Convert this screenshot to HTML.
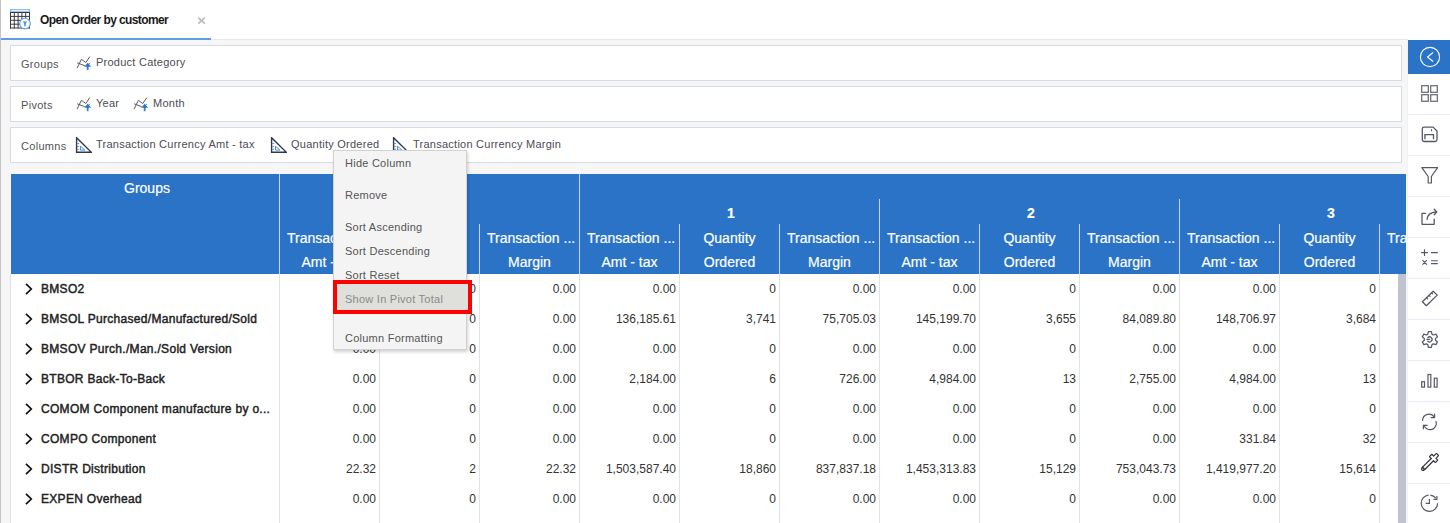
<!DOCTYPE html>
<html><head><meta charset="utf-8">
<style>
*{box-sizing:border-box;margin:0;padding:0}
html,body{width:1450px;height:523px;overflow:hidden;background:#fff;font-family:"Liberation Sans",sans-serif;position:relative}
.abs{position:absolute}
#leftline{left:0;top:0;width:1px;height:523px;background:#c4c4c4}
#tabbar{left:1px;top:0;width:1407px;height:40px;background:#fff;border-bottom:1px solid #e9e9e9}
#tab{left:1px;top:0;width:210px;height:40px;border-bottom:2px solid #5f9de9}
#tabtitle{left:40px;top:12.5px;font-size:12px;font-weight:bold;color:#1a1a1a;letter-spacing:-0.6px;white-space:nowrap}
#tabx{left:197px;top:13px;font-size:14px;font-weight:bold;color:#bdbdbd}
#content{left:1px;top:40px;width:1406px;height:483px;background:#f6f6f6}
.panel{left:10px;width:1392px;height:36px;background:#fff;border:1px solid #d6dce4}
.plabel{position:absolute;left:10px;font-size:11px;color:#555;white-space:nowrap;letter-spacing:0.3px}
.chip{position:absolute;font-size:11px;color:#4c4c56;white-space:nowrap;letter-spacing:0.25px}
.ico{position:absolute}
#table{left:11px;top:174px;width:1395px;height:349px;overflow:hidden;background:#fff}
#thead{left:0;top:0;width:1395px;height:100px;background:#2a73c6}
.vl{position:absolute;width:1px;background:#c9d6ea}
.vlb{position:absolute;width:1px;background:#dfe3ea}
.ht{position:absolute;color:#fff;font-size:14px;text-align:center;white-space:nowrap;line-height:24px;-webkit-text-stroke:0.2px #fff}
.rn{position:absolute;left:30px;font-size:12px;font-weight:normal;letter-spacing:0.3px;-webkit-text-stroke:0.45px #222;color:#222;white-space:nowrap}
.chev{position:absolute;left:14px}
.num{position:absolute;font-size:12px;color:#333;text-align:right;white-space:nowrap;width:97px}
#scroll{left:1387px;top:100px;width:8px;height:249px;background:#c0c2d0}
#sidebar{left:1407px;top:40px;width:43px;height:483px;background:#fff;border-left:1px solid #eef2f9}
#sbtn{left:1408px;top:40px;width:42px;height:34px;background:#2a73c6}
.sep{position:absolute;left:1408px;width:42px;height:1px;background:#e9eef6}
#menu{left:333px;top:150px;width:134px;height:200px;background:#f4f4f4;border:1px solid #d2d2d2;box-shadow:1px 2px 3px rgba(0,0,0,0.18)}
.mi{position:absolute;left:11px;font-size:11px;color:#555;white-space:nowrap;letter-spacing:0.25px}
#redbox{left:333px;top:280px;width:139px;height:34px;border:4px solid #f00}
#redin{left:337px;top:284px;width:131px;height:26px;background:#dfdfdb}
</style></head><body>
<div id="leftline" class="abs"></div>
<div id="tabbar" class="abs"></div>
<div id="tab" class="abs"></div>
<!-- tab icon -->
<svg class="abs" style="left:9px;top:8px" width="24" height="23" viewBox="9 8 24 23">
  <rect x="10" y="9" width="20" height="3" fill="#93bdf0"/>
  <rect x="11.5" y="10.2" width="17" height="0.9" fill="#fff"/>
  <g stroke="#3a3a44" stroke-width="1" fill="none">
    <path d="M10.5 12 V28.5 M14.3 12 V28.5 M18.1 12 V28.5 M21.9 12 V28.5 M25.7 12 V28.5 M29.5 12 V28.5"/>
    <path d="M10 12.5 H30 M10 16.4 H30 M10 20.3 H30 M10 24.2 H30 M10 28 H30"/>
  </g>
  <circle cx="25" cy="23.6" r="5.3" fill="#fff" stroke="#5f9de9" stroke-width="1.1"/>
  <path d="M22.7 21.4 H27.3 L25.8 23.6 V26.2 H24.2 V23.6 Z" fill="#4a90e2"/>
</svg>
<div id="tabtitle" class="abs">Open Order by customer</div>
<svg class="abs" style="left:196px;top:15px" width="11" height="11" viewBox="196 15 11 11"><path d="M198.3 17.6 L204.8 23.7 M204.8 17.6 L198.3 23.7" stroke="#bcbcbc" stroke-width="1.7"/></svg>

<div id="content" class="abs"></div>

<!-- Panels -->
<div class="panel abs" style="top:45px">
  <div class="plabel" style="top:12px">Groups</div>
  <svg class="ico" style="left:65px;top:10px" width="16" height="15" viewBox="0 0 16 15">
    <path d="M1 12.2 L5.4 3.3 L9.8 6.5 L13.8 0.6" fill="none" stroke="#5a5a62" stroke-width="1"/>
    <path d="M1.2 6.8 L9.5 10 L13.8 7.4" fill="none" stroke="#5a5a62" stroke-width="1"/>
    <path d="M11.7 6.4 L15.6 10.9 H12.8 V14.3 H10.6 V10.9 H7.8 Z" fill="#2a73c6" stroke="#fff" stroke-width="0.5"/>
  </svg>
  <div class="chip" style="left:85px;top:10px">Product Category</div>
</div>
<div class="panel abs" style="top:86px">
  <div class="plabel" style="top:12px">Pivots</div>
  <svg class="ico" style="left:65px;top:10px" width="16" height="15" viewBox="0 0 16 15">
    <path d="M1 12.2 L5.4 3.3 L9.8 6.5 L13.8 0.6" fill="none" stroke="#5a5a62" stroke-width="1"/>
    <path d="M1.2 6.8 L9.5 10 L13.8 7.4" fill="none" stroke="#5a5a62" stroke-width="1"/>
    <path d="M11.7 6.4 L15.6 10.9 H12.8 V14.3 H10.6 V10.9 H7.8 Z" fill="#2a73c6" stroke="#fff" stroke-width="0.5"/>
  </svg>
  <div class="chip" style="left:85px;top:10px">Year</div>
  <svg class="ico" style="left:122px;top:10px" width="16" height="15" viewBox="0 0 16 15">
    <path d="M1 12.2 L5.4 3.3 L9.8 6.5 L13.8 0.6" fill="none" stroke="#5a5a62" stroke-width="1"/>
    <path d="M1.2 6.8 L9.5 10 L13.8 7.4" fill="none" stroke="#5a5a62" stroke-width="1"/>
    <path d="M11.7 6.4 L15.6 10.9 H12.8 V14.3 H10.6 V10.9 H7.8 Z" fill="#2a73c6" stroke="#fff" stroke-width="0.5"/>
  </svg>
  <div class="chip" style="left:142px;top:10px">Month</div>
</div>
<div class="panel abs" style="top:127px">
  <div class="plabel" style="top:12px">Columns</div>
  <svg class="ico" style="left:64px;top:9px" width="17" height="17" viewBox="0 0 17 17">
    <path d="M1.6 0.7 V15.3 H16.4 Z" fill="none" stroke="#34364a" stroke-width="1.4" stroke-linejoin="miter"/>
    <path d="M2.2 6.5 H4.2 M2.2 9.4 H4.2 M2.2 12.3 H4.2" stroke="#4a8ee0" stroke-width="0.9"/>
    <path d="M5.5 9.2 V13.1 H9.9 Z" fill="none" stroke="#4a8ee0" stroke-width="1"/>
  </svg>
  <div class="chip" style="left:85px;top:10px">Transaction Currency Amt - tax</div>
  <svg class="ico" style="left:259px;top:9px" width="17" height="17" viewBox="0 0 17 17">
    <path d="M1.6 0.7 V15.3 H16.4 Z" fill="none" stroke="#34364a" stroke-width="1.4" stroke-linejoin="miter"/>
    <path d="M2.2 6.5 H4.2 M2.2 9.4 H4.2 M2.2 12.3 H4.2" stroke="#4a8ee0" stroke-width="0.9"/>
    <path d="M5.5 9.2 V13.1 H9.9 Z" fill="none" stroke="#4a8ee0" stroke-width="1"/>
  </svg>
  <div class="chip" style="left:280px;top:10px">Quantity Ordered</div>
  <svg class="ico" style="left:381px;top:9px" width="17" height="17" viewBox="0 0 17 17">
    <path d="M1.6 0.7 V15.3 H16.4 Z" fill="none" stroke="#34364a" stroke-width="1.4" stroke-linejoin="miter"/>
    <path d="M2.2 6.5 H4.2 M2.2 9.4 H4.2 M2.2 12.3 H4.2" stroke="#4a8ee0" stroke-width="0.9"/>
    <path d="M5.5 9.2 V13.1 H9.9 Z" fill="none" stroke="#4a8ee0" stroke-width="1"/>
  </svg>
  <div class="chip" style="left:402px;top:10px">Transaction Currency Margin</div>
</div>

<!-- Table -->
<div class="abs" style="left:10px;top:274px;width:1px;height:249px;background:#dbe1e9"></div>
<div id="table" class="abs">
  <div id="thead" class="abs">
    <div class="ht" style="left:2px;width:268px;top:2px">Groups</div>
  </div>
  <div id="tcols">
<div class="vl" style="left:268px;top:0px;height:100px"></div>
<div class="vlb" style="left:268px;top:100px;height:249px"></div>
<div class="vl" style="left:368px;top:50px;height:50px"></div>
<div class="vlb" style="left:368px;top:100px;height:249px"></div>
<div class="vl" style="left:468px;top:50px;height:50px"></div>
<div class="vlb" style="left:468px;top:100px;height:249px"></div>
<div class="vl" style="left:568px;top:0px;height:100px"></div>
<div class="vlb" style="left:568px;top:100px;height:249px"></div>
<div class="vl" style="left:668px;top:50px;height:50px"></div>
<div class="vlb" style="left:668px;top:100px;height:249px"></div>
<div class="vl" style="left:768px;top:50px;height:50px"></div>
<div class="vlb" style="left:768px;top:100px;height:249px"></div>
<div class="vl" style="left:868px;top:25px;height:75px"></div>
<div class="vlb" style="left:868px;top:100px;height:249px"></div>
<div class="vl" style="left:968px;top:50px;height:50px"></div>
<div class="vlb" style="left:968px;top:100px;height:249px"></div>
<div class="vl" style="left:1068px;top:50px;height:50px"></div>
<div class="vlb" style="left:1068px;top:100px;height:249px"></div>
<div class="vl" style="left:1168px;top:25px;height:75px"></div>
<div class="vlb" style="left:1168px;top:100px;height:249px"></div>
<div class="vl" style="left:1268px;top:50px;height:50px"></div>
<div class="vlb" style="left:1268px;top:100px;height:249px"></div>
<div class="vl" style="left:1368px;top:50px;height:50px"></div>
<div class="vlb" style="left:1368px;top:100px;height:249px"></div>
<div class="ht" style="left:570px;width:300px;top:27px;font-weight:bold">1</div>
<div class="ht" style="left:870px;width:300px;top:27px;font-weight:bold">2</div>
<div class="ht" style="left:1170px;width:300px;top:27px;font-weight:bold">3</div>
<div class="ht" style="left:269px;width:99px;top:52px;text-align:left;padding-left:7px">Transaction ...</div>
<div class="ht" style="left:269px;width:99px;top:76px">Amt - tax</div>
<div class="ht" style="left:369px;width:99px;top:52px">Quantity</div>
<div class="ht" style="left:369px;width:99px;top:76px">Ordered</div>
<div class="ht" style="left:469px;width:99px;top:52px;text-align:left;padding-left:7px">Transaction ...</div>
<div class="ht" style="left:469px;width:99px;top:76px">Margin</div>
<div class="ht" style="left:569px;width:99px;top:52px;text-align:left;padding-left:7px">Transaction ...</div>
<div class="ht" style="left:569px;width:99px;top:76px">Amt - tax</div>
<div class="ht" style="left:669px;width:99px;top:52px">Quantity</div>
<div class="ht" style="left:669px;width:99px;top:76px">Ordered</div>
<div class="ht" style="left:769px;width:99px;top:52px;text-align:left;padding-left:7px">Transaction ...</div>
<div class="ht" style="left:769px;width:99px;top:76px">Margin</div>
<div class="ht" style="left:869px;width:99px;top:52px;text-align:left;padding-left:7px">Transaction ...</div>
<div class="ht" style="left:869px;width:99px;top:76px">Amt - tax</div>
<div class="ht" style="left:969px;width:99px;top:52px">Quantity</div>
<div class="ht" style="left:969px;width:99px;top:76px">Ordered</div>
<div class="ht" style="left:1069px;width:99px;top:52px;text-align:left;padding-left:7px">Transaction ...</div>
<div class="ht" style="left:1069px;width:99px;top:76px">Margin</div>
<div class="ht" style="left:1169px;width:99px;top:52px;text-align:left;padding-left:7px">Transaction ...</div>
<div class="ht" style="left:1169px;width:99px;top:76px">Amt - tax</div>
<div class="ht" style="left:1269px;width:99px;top:52px">Quantity</div>
<div class="ht" style="left:1269px;width:99px;top:76px">Ordered</div>
<div class="ht" style="left:1369px;width:99px;top:52px;text-align:left;padding-left:7px">Transaction ...</div>
<div class="ht" style="left:1369px;width:99px;top:76px">Margin</div>
<svg class="chev" style="top:108.8px" width="9" height="12" viewBox="0 0 9 12"><path d="M1 0.8 L6.3 6 L1 11.2" fill="none" stroke="#111" stroke-width="1.7"/></svg>
<div class="rn" style="top:101px;line-height:29px">BMSO2</div>
<div class="num" style="left:268px;top:101px;line-height:29px">0.00</div>
<div class="num" style="left:368px;top:101px;line-height:29px">0</div>
<div class="num" style="left:468px;top:101px;line-height:29px">0.00</div>
<div class="num" style="left:568px;top:101px;line-height:29px">0.00</div>
<div class="num" style="left:668px;top:101px;line-height:29px">0</div>
<div class="num" style="left:768px;top:101px;line-height:29px">0.00</div>
<div class="num" style="left:868px;top:101px;line-height:29px">0.00</div>
<div class="num" style="left:968px;top:101px;line-height:29px">0</div>
<div class="num" style="left:1068px;top:101px;line-height:29px">0.00</div>
<div class="num" style="left:1168px;top:101px;line-height:29px">0.00</div>
<div class="num" style="left:1268px;top:101px;line-height:29px">0</div>
<svg class="chev" style="top:138.8px" width="9" height="12" viewBox="0 0 9 12"><path d="M1 0.8 L6.3 6 L1 11.2" fill="none" stroke="#111" stroke-width="1.7"/></svg>
<div class="rn" style="top:131px;line-height:29px">BMSOL Purchased/Manufactured/Sold</div>
<div class="num" style="left:268px;top:131px;line-height:29px">0.00</div>
<div class="num" style="left:368px;top:131px;line-height:29px">0</div>
<div class="num" style="left:468px;top:131px;line-height:29px">0.00</div>
<div class="num" style="left:568px;top:131px;line-height:29px">136,185.61</div>
<div class="num" style="left:668px;top:131px;line-height:29px">3,741</div>
<div class="num" style="left:768px;top:131px;line-height:29px">75,705.03</div>
<div class="num" style="left:868px;top:131px;line-height:29px">145,199.70</div>
<div class="num" style="left:968px;top:131px;line-height:29px">3,655</div>
<div class="num" style="left:1068px;top:131px;line-height:29px">84,089.80</div>
<div class="num" style="left:1168px;top:131px;line-height:29px">148,706.97</div>
<div class="num" style="left:1268px;top:131px;line-height:29px">3,684</div>
<svg class="chev" style="top:168.8px" width="9" height="12" viewBox="0 0 9 12"><path d="M1 0.8 L6.3 6 L1 11.2" fill="none" stroke="#111" stroke-width="1.7"/></svg>
<div class="rn" style="top:161px;line-height:29px">BMSOV Purch./Man./Sold Version</div>
<div class="num" style="left:268px;top:161px;line-height:29px">0.00</div>
<div class="num" style="left:368px;top:161px;line-height:29px">0</div>
<div class="num" style="left:468px;top:161px;line-height:29px">0.00</div>
<div class="num" style="left:568px;top:161px;line-height:29px">0.00</div>
<div class="num" style="left:668px;top:161px;line-height:29px">0</div>
<div class="num" style="left:768px;top:161px;line-height:29px">0.00</div>
<div class="num" style="left:868px;top:161px;line-height:29px">0.00</div>
<div class="num" style="left:968px;top:161px;line-height:29px">0</div>
<div class="num" style="left:1068px;top:161px;line-height:29px">0.00</div>
<div class="num" style="left:1168px;top:161px;line-height:29px">0.00</div>
<div class="num" style="left:1268px;top:161px;line-height:29px">0</div>
<svg class="chev" style="top:198.8px" width="9" height="12" viewBox="0 0 9 12"><path d="M1 0.8 L6.3 6 L1 11.2" fill="none" stroke="#111" stroke-width="1.7"/></svg>
<div class="rn" style="top:191px;line-height:29px">BTBOR Back-To-Back</div>
<div class="num" style="left:268px;top:191px;line-height:29px">0.00</div>
<div class="num" style="left:368px;top:191px;line-height:29px">0</div>
<div class="num" style="left:468px;top:191px;line-height:29px">0.00</div>
<div class="num" style="left:568px;top:191px;line-height:29px">2,184.00</div>
<div class="num" style="left:668px;top:191px;line-height:29px">6</div>
<div class="num" style="left:768px;top:191px;line-height:29px">726.00</div>
<div class="num" style="left:868px;top:191px;line-height:29px">4,984.00</div>
<div class="num" style="left:968px;top:191px;line-height:29px">13</div>
<div class="num" style="left:1068px;top:191px;line-height:29px">2,755.00</div>
<div class="num" style="left:1168px;top:191px;line-height:29px">4,984.00</div>
<div class="num" style="left:1268px;top:191px;line-height:29px">13</div>
<svg class="chev" style="top:228.8px" width="9" height="12" viewBox="0 0 9 12"><path d="M1 0.8 L6.3 6 L1 11.2" fill="none" stroke="#111" stroke-width="1.7"/></svg>
<div class="rn" style="top:221px;line-height:29px">COMOM Component manufacture by o...</div>
<div class="num" style="left:268px;top:221px;line-height:29px">0.00</div>
<div class="num" style="left:368px;top:221px;line-height:29px">0</div>
<div class="num" style="left:468px;top:221px;line-height:29px">0.00</div>
<div class="num" style="left:568px;top:221px;line-height:29px">0.00</div>
<div class="num" style="left:668px;top:221px;line-height:29px">0</div>
<div class="num" style="left:768px;top:221px;line-height:29px">0.00</div>
<div class="num" style="left:868px;top:221px;line-height:29px">0.00</div>
<div class="num" style="left:968px;top:221px;line-height:29px">0</div>
<div class="num" style="left:1068px;top:221px;line-height:29px">0.00</div>
<div class="num" style="left:1168px;top:221px;line-height:29px">0.00</div>
<div class="num" style="left:1268px;top:221px;line-height:29px">0</div>
<svg class="chev" style="top:258.8px" width="9" height="12" viewBox="0 0 9 12"><path d="M1 0.8 L6.3 6 L1 11.2" fill="none" stroke="#111" stroke-width="1.7"/></svg>
<div class="rn" style="top:251px;line-height:29px">COMPO Component</div>
<div class="num" style="left:268px;top:251px;line-height:29px">0.00</div>
<div class="num" style="left:368px;top:251px;line-height:29px">0</div>
<div class="num" style="left:468px;top:251px;line-height:29px">0.00</div>
<div class="num" style="left:568px;top:251px;line-height:29px">0.00</div>
<div class="num" style="left:668px;top:251px;line-height:29px">0</div>
<div class="num" style="left:768px;top:251px;line-height:29px">0.00</div>
<div class="num" style="left:868px;top:251px;line-height:29px">0.00</div>
<div class="num" style="left:968px;top:251px;line-height:29px">0</div>
<div class="num" style="left:1068px;top:251px;line-height:29px">0.00</div>
<div class="num" style="left:1168px;top:251px;line-height:29px">331.84</div>
<div class="num" style="left:1268px;top:251px;line-height:29px">32</div>
<svg class="chev" style="top:288.8px" width="9" height="12" viewBox="0 0 9 12"><path d="M1 0.8 L6.3 6 L1 11.2" fill="none" stroke="#111" stroke-width="1.7"/></svg>
<div class="rn" style="top:281px;line-height:29px">DISTR Distribution</div>
<div class="num" style="left:268px;top:281px;line-height:29px">22.32</div>
<div class="num" style="left:368px;top:281px;line-height:29px">2</div>
<div class="num" style="left:468px;top:281px;line-height:29px">22.32</div>
<div class="num" style="left:568px;top:281px;line-height:29px">1,503,587.40</div>
<div class="num" style="left:668px;top:281px;line-height:29px">18,860</div>
<div class="num" style="left:768px;top:281px;line-height:29px">837,837.18</div>
<div class="num" style="left:868px;top:281px;line-height:29px">1,453,313.83</div>
<div class="num" style="left:968px;top:281px;line-height:29px">15,129</div>
<div class="num" style="left:1068px;top:281px;line-height:29px">753,043.73</div>
<div class="num" style="left:1168px;top:281px;line-height:29px">1,419,977.20</div>
<div class="num" style="left:1268px;top:281px;line-height:29px">15,614</div>
<svg class="chev" style="top:318.8px" width="9" height="12" viewBox="0 0 9 12"><path d="M1 0.8 L6.3 6 L1 11.2" fill="none" stroke="#111" stroke-width="1.7"/></svg>
<div class="rn" style="top:311px;line-height:29px">EXPEN Overhead</div>
<div class="num" style="left:268px;top:311px;line-height:29px">0.00</div>
<div class="num" style="left:368px;top:311px;line-height:29px">0</div>
<div class="num" style="left:468px;top:311px;line-height:29px">0.00</div>
<div class="num" style="left:568px;top:311px;line-height:29px">0.00</div>
<div class="num" style="left:668px;top:311px;line-height:29px">0</div>
<div class="num" style="left:768px;top:311px;line-height:29px">0.00</div>
<div class="num" style="left:868px;top:311px;line-height:29px">0.00</div>
<div class="num" style="left:968px;top:311px;line-height:29px">0</div>
<div class="num" style="left:1068px;top:311px;line-height:29px">0.00</div>
<div class="num" style="left:1168px;top:311px;line-height:29px">0.00</div>
<div class="num" style="left:1268px;top:311px;line-height:29px">0</div>
</div>
  <div id="scroll" class="abs"></div>
</div>

<!-- Sidebar -->
<div id="sidebar" class="abs"></div>
<div id="sbtn" class="abs"></div>
<div id="sicons">
<svg class="abs" style="left:1408px;top:40px" width="42" height="483" viewBox="1408 40 42 483">
  <g fill="none" stroke="#e9eef6" stroke-width="1">
    <path d="M1408 114.5 H1450 M1408 155.5 H1450 M1408 196.5 H1450 M1408 237.5 H1450 M1408 278.5 H1450 M1408 319.5 H1450 M1408 360.5 H1450 M1408 401.5 H1450 M1408 442.5 H1450 M1408 483.5 H1450"/>
  </g>
  <!-- back -->
  <circle cx="1430" cy="57" r="9.6" fill="none" stroke="#fff" stroke-width="1.1"/>
  <path d="M1433 52.5 L1427.5 57 L1433 61.5" fill="none" stroke="#fff" stroke-width="1.1"/>
  <g fill="none" stroke="#565866" stroke-width="1.3" stroke-linejoin="round" stroke-linecap="round">
    <!-- grid -->
    <rect x="1421.7" y="85.7" width="6.6" height="6.6" stroke="#6f727d" stroke-linejoin="miter"/>
    <rect x="1430.7" y="85.7" width="6.6" height="6.6" stroke="#6f727d" stroke-linejoin="miter"/>
    <rect x="1421.7" y="94.7" width="6.6" height="6.6" stroke="#6f727d" stroke-linejoin="miter"/>
    <rect x="1430.7" y="94.7" width="6.6" height="6.6" stroke="#6f727d" stroke-linejoin="miter"/>
    <!-- save -->
    <path d="M1422.3 128.9 Q1422.3 127.1 1424.1 127.1 H1433.1 L1437 131 V139.7 Q1437 141.5 1435.2 141.5 H1424.1 Q1422.3 141.5 1422.3 139.7 Z"/>
    <path d="M1424.9 139.2 V134.7 H1433.5 V139.2" stroke-linecap="butt" stroke-linejoin="miter"/>
    <path d="M1431.5 129.2 V131.3" stroke-width="1.1" stroke-linecap="butt"/>
    <!-- filter -->
    <path d="M1421.8 167.6 H1437.6 L1431.4 176.5 V183 H1428.2 V176.5 Z" stroke-width="1.2"/>
    <!-- share -->
    <path d="M1425.6 213.3 H1422 V224.3 H1434.2 V219.2"/>
    <path d="M1427.1 219.4 Q1427.6 212.4 1436.2 212"/>
    <path d="M1434.2 209.3 L1436.8 212 L1434.3 214.7"/>
    <!-- calc -->
    <path d="M1421.1 252.6 H1427.9 M1424.5 249.3 V255.9 M1431 252.6 H1437.8" stroke-width="1.15" stroke-linecap="butt"/>
    <path d="M1422.4 260.1 L1426.9 264.6 M1426.9 260.1 L1422.4 264.6 M1431 260.7 H1437.8 M1431 263.6 H1437.8" stroke-width="1.15" stroke-linecap="butt"/>
    <!-- ruler -->
    <path d="M1422.4 301.8 L1433.2 291.2 L1437.2 295.1 L1426.3 305.7 Z" stroke-width="1.25"/>
    <path d="M1426.5 297.8 L1427.6 298.9 M1429 295.3 L1430.1 296.4 M1431.5 292.8 L1432.6 293.9" stroke-width="1.2"/>
    <!-- gear -->
    <path d="M1427.80 334.21 L1428.37 331.55 L1431.43 331.55 L1432.00 334.21 L1433.35 334.99 L1435.94 334.15 L1437.46 336.80 L1435.45 338.62 L1435.45 340.18 L1437.46 342.00 L1435.94 344.65 L1433.35 343.81 L1432.00 344.59 L1431.43 347.25 L1428.37 347.25 L1427.80 344.59 L1426.45 343.81 L1423.86 344.65 L1422.34 342.00 L1424.35 340.18 L1424.35 338.62 L1422.34 336.80 L1423.86 334.15 L1426.45 334.99 Z" stroke-width="1.25"/>
    <path d="M1427.8 337.6 A2.5 2.5 0 1 1 1427.8 341.2 M1427 339.4 H1429.6" stroke-width="1.25"/>
    <!-- bars -->
    <rect x="1421.7" y="381.7" width="2.8" height="5.4" stroke-width="1.2" stroke-linejoin="miter"/>
    <rect x="1428" y="374.5" width="2.8" height="12.6" stroke-width="1.2" stroke-linejoin="miter"/>
    <rect x="1434.3" y="378.2" width="2.8" height="8.9" stroke-width="1.2" stroke-linejoin="miter"/>
    <!-- refresh -->
    <path d="M1422.6 420.4 A6.3 6.3 0 0 1 1434.3 417.3" stroke-width="1.2"/>
    <path d="M1434.6 414.2 V417.6 H1431.1" stroke-width="1.2"/>
    <path d="M1436 421.4 A6.3 6.3 0 0 1 1424 425.4" stroke-width="1.2"/>
    <path d="M1423.4 428.8 V425.3 H1427.2" stroke-width="1.2"/>
    <!-- eyedropper -->
    <g transform="translate(1422.6 469.4) rotate(-45)" stroke="#2e2f3a" stroke-width="1.15">
      <path d="M2.2 -1.6 H13.8 M2.2 1.6 H13.8"/>
      <path d="M2.2 -1.6 Q-0.9 -1.9 -0.9 0 Q-0.9 1.9 2.2 1.6" />
      <path d="M13.8 -1.6 V-3.9 Q13.8 -4.2 14.2 -4.2 H16.9 Q17.3 -4.2 17.3 -3.8 V-1.6 H20.6 Q21.1 -1.6 21.1 -1.1 V1.1 Q21.1 1.6 20.6 1.6 H17.3 V3.8 Q17.3 4.2 16.9 4.2 H14.2 Q13.8 4.2 13.8 3.9 V1.6"/>
      <circle cx="1.3" cy="0" r="1.1" fill="#2e2f3a" stroke="none"/>
    </g>
    <!-- history -->
    <path d="M1428.6 495.05 A8.2 8.2 0 1 0 1437.6 503.2" stroke-width="1.2" stroke-linecap="butt"/>
    <path d="M1430.3 495.05 A8.2 8.2 0 0 1 1435.9 498.2" stroke-width="1.2" stroke-linecap="butt"/>
    <path d="M1433.4 499.3 H1436.9 V495.9" stroke-width="1.2" stroke-linecap="butt" stroke-linejoin="miter"/>
    <path d="M1429.4 498.9 V503.4 H1425.6" stroke-width="1.2" stroke-linecap="butt" stroke-linejoin="miter"/>
  </g>
</svg>
</div>

<!-- Menu -->
<div id="menu" class="abs">
  <div class="mi" style="top:6px">Hide Column</div>
  <div class="mi" style="top:38px">Remove</div>
  <div class="mi" style="top:70px">Sort Ascending</div>
  <div class="mi" style="top:94px">Sort Descending</div>
  <div class="mi" style="top:118px">Sort Reset</div>
  <div class="mi" style="top:181px">Column Formatting</div>
</div>
<div id="redbox" class="abs"></div>
<div id="redin" class="abs"></div>
<div class="abs mi" style="left:345px;top:292.5px;color:#8a8a8a">Show In Pivot Total</div>
</body></html>
